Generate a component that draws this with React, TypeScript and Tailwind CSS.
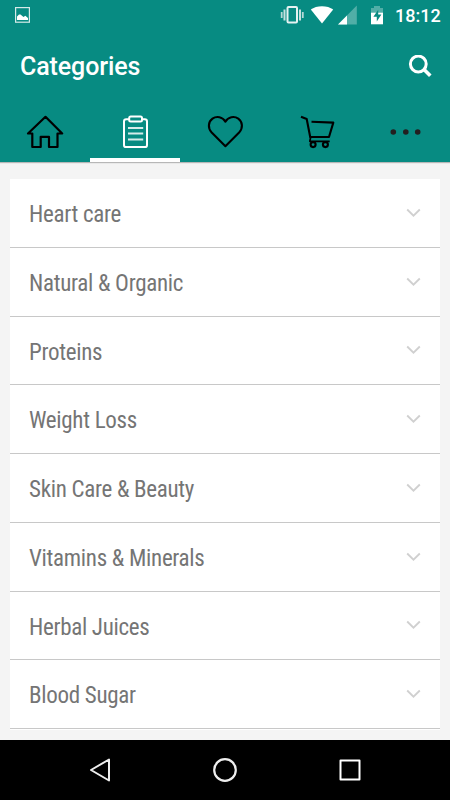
import React, { useState } from 'react';

const categories = [
    "Heart care",
    "Natural & Organic",
    "Proteins",
    "Weight Loss",
    "Skin Care & Beauty",
    "Vitamins & Minerals",
    "Herbal Juices",
    "Blood Sugar",
];

function StatusBar() {
    return (
        <div className="flex h-8 items-start justify-between text-white">
            <svg className="ml-[15px] mt-[7px]" width="15" height="16" viewBox="0 0 15 16" fill="none">
                <rect x="0.6" y="0.6" width="13.8" height="14.6" stroke="#d5eae8" strokeWidth="1.2" />
                <path d="M2 13V9.5L4 7.5h1.5l3 2.5 1.8-1.3 2.7 2.3v2z" fill="#fff" />
            </svg>
            <div className="flex items-start">
                <svg width="110" height="28" viewBox="280 0 110 28" fill="none">
                    {/* vibrate */}
                    <rect x="287.5" y="7" width="9.5" height="15.5" rx="1" stroke="#e5f2f1" strokeWidth="2" />
                    <path d="M284.5 9.500v11M300 9.500v11" stroke="#c5e1df" strokeWidth="2" />
                    <path d="M281.700 12v6M302.800 12v6" stroke="#b5d9d6" strokeWidth="1.800" />
                    {/* wifi */}
                    <path d="M310.8 9.6C316.500 5 327.500 5 333.200 9.600L322 23.600z" fill="#fff" />
                    {/* signal */}
                    <path d="M338 24.400L356.800 5.600v18.800z" fill="#fff" fillOpacity="0.3" />
                    <path d="M338 24.400L347 15.400v9z" fill="#fff" />
                    {/* battery */}
                    <path d="M371 13V8h3V6h6v2h3v5z" fill="#fff" fillOpacity="0.3" />
                    <path d="M371 12.700h12V24.300H371z" fill="#fff" />
                    <path d="M378.200 9.800L373.400 16.800h3.400v4.800l4.600-7h-3.200z" fill="#078b82" />
                </svg>
                <span className="mr-[10px] mt-[5px] ml-[5px] w-[45px] text-[18px] leading-[21px] font-[480]">18:12</span>
            </div>
        </div>
    );
}

function HomeIcon() {
    return (
        <svg width="40" height="36" viewBox="25 114 40 36" fill="none" stroke="#000" strokeWidth="2.200" strokeLinejoin="round">
            <path d="M45.500 116.800L28 133.500H32.300V147H40.700V136.800H49V147H57.500V133.500H62.200z" />
        </svg>
    );
}

function ListIcon() {
    return (
        <svg width="40" height="36" viewBox="115 114 40 36" fill="none" stroke="#fff" strokeWidth="2" strokeLinejoin="round">
            <path d="M129 119.300h-2.800q-2.200 0-2.200 2.200v23.400q0 2.200 2.200 2.200h18.600q2.200 0 2.200-2.200v-23.400q0-2.200-2.200-2.200H142" />
            <rect x="129.200" y="116.600" width="12.800" height="4.800" rx="1.500" />
            <path d="M128 128h15.200M128 133.600h15.200M128 139.400h15.200" stroke="#d5ebe9" />
        </svg>
    );
}

function HeartIcon() {
    return (
        <svg width="40" height="36" viewBox="205 114 40 36" fill="none" stroke="#000" strokeWidth="2.100" strokeLinejoin="round">
            <path d="M225.400 146.200L211.700 132.600C207.500 128 208.200 121.800 212.500 118.700C216.800 115.700 222.500 117 225.400 121.600C228.300 117 234 115.700 238.300 118.700C242.600 121.800 243.300 128 239.100 132.600z" />
        </svg>
    );
}

function CartIcon() {
    return (
        <svg width="40" height="36" viewBox="295 114 40 36" fill="none" stroke="#000" strokeWidth="2.100" strokeLinejoin="round">
            <path d="M301 116.700L306.700 119L310.200 137H329L333.300 122.600L311.500 121.700" />
            <path d="M310.600 137.500L309.800 141.300H329.700" strokeWidth="1.700" />
            <circle cx="313.100" cy="144.600" r="2.500" />
            <circle cx="325.400" cy="144.600" r="2.500" />
        </svg>
    );
}

function MoreIcon() {
    return (
        <svg width="40" height="36" viewBox="385 114 40 36" fill="#231f20">
            <circle cx="393.300" cy="132" r="2.800" />
            <circle cx="405.800" cy="132" r="2.800" />
            <circle cx="417.700" cy="132" r="2.800" />
        </svg>
    );
}

const tabs = [
    { name: "home", icon: <HomeIcon /> },
    { name: "categories", icon: <ListIcon /> },
    { name: "favourites", icon: <HeartIcon /> },
    { name: "cart", icon: <CartIcon /> },
    { name: "more", icon: <MoreIcon /> },
];

export default function App() {
    const [ active, setActive ] = useState("categories");

    return (
        <div className="flex h-[800px] w-[450px] flex-col overflow-hidden bg-[#f4f4f4] font-['Roboto',sans-serif]">
            <header className="h-[162px] shrink-0 bg-[#078b82] shadow-[0_1px_1px_rgba(0,0,0,0.25)]">
                <StatusBar />
                <div className="flex h-[70px] items-center justify-between pl-5 pr-[18px]">
                    <h1 className="text-[25px] leading-7 font-medium tracking-[-0.1px] text-white">Categories</h1>
                    <svg width="24" height="24" viewBox="408 54 24 24" fill="none" stroke="#fff" strokeWidth="3">
                        <circle cx="418.300" cy="63" r="7.900" />
                        <path d="M423.800 68.300L430.300 74.800" strokeWidth="3.600" />
                    </svg>
                </div>
                <nav className="flex h-[60px]">
                    {tabs.map((tab) => (
                        <button
                            key={tab.name}
                            onClick={() => setActive(tab.name)}
                            className={`flex h-[60px] w-[90px] justify-center border-b-4 pt-3 ${active === tab.name ? "border-white" : "border-transparent"}`}
                        >
                            {tab.icon}
                        </button>
                    ))}
                </nav>
            </header>

            <main className="flex-grow px-[10px] pt-[17px]">
                <ul className="h-[551px] bg-white">
                    {categories.map((category) => (
                        <li key={category} className="flex h-[68.750px] items-center justify-between border-b border-[#c8c8c8] pl-[19px] pr-[19px]">
                            <span className="pt-[4.500px] text-[23px] leading-7 tracking-[-0.3px] text-[#757575] font-['Roboto_Condensed','Roboto',sans-serif] [font-stretch:75%]">{category}</span>
                            <svg width="15" height="10" viewBox="0 0 15 10" fill="none" stroke="#d0d0d0" strokeWidth="1.800">
                                <path d="M1.200 1.500L7.500 7.700L13.800 1.500" />
                            </svg>
                        </li>
                    ))}
                </ul>
            </main>

            <footer className="h-[60px] shrink-0 bg-black">
                <svg width="450" height="60" viewBox="0 740 450 60" fill="none" stroke="#eee" strokeWidth="2" strokeLinejoin="round">
                    <path d="M109 759.500V780.500L91 770z" />
                    <circle cx="225" cy="770" r="10.800" strokeWidth="2.200" />
                    <rect x="340.500" y="760.500" width="19" height="19" stroke="#fff" />
                </svg>
            </footer>
        </div>
    );
}
